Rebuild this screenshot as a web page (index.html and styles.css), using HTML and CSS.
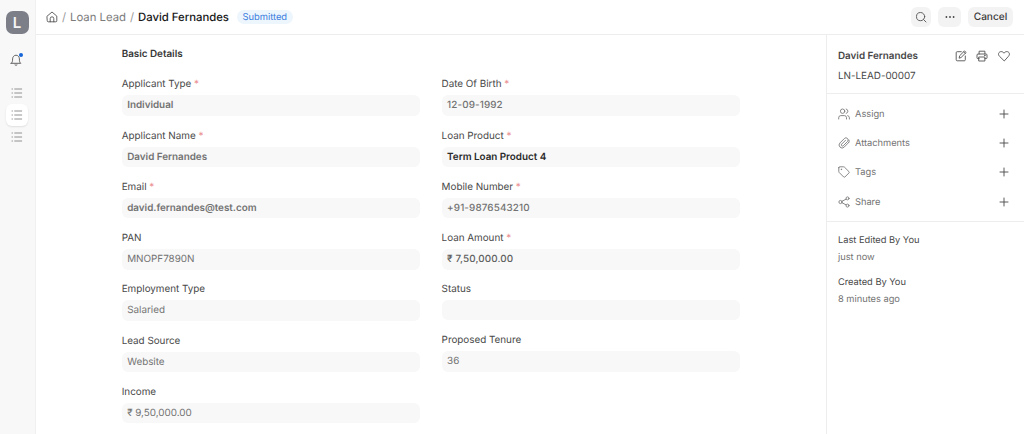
FILE: index.html
```html
<!DOCTYPE html>
<html lang="en">
<head>
	<meta charset="utf-8">
	<title>David Fernandes</title>
	<link rel="stylesheet" href="styles.css">
</head>
<body>

<!-- shared icons -->
<svg class="defs">
	<symbol id="list" viewBox="0 0 12 12"><path d="M3.700 2h7M3.700 6h7M3.700 10h7M1 2h.5M1 6h.5M1 10h.5"/></symbol>
	<symbol id="plus" viewBox="0 0 10 10"><path d="M5 1v8M1 5h8"/></symbol>
</svg>

<div class="app">
	<nav class="rail">
		<div class="logo">L</div>
		<div class="bell">
			<svg viewBox="0 0 12 12"><path d="M1.2 9.300h9.600C9.500 8.300 9.400 7 9.400 4.900C9.400 2.900 7.900 1.200 6 1.200S2.600 2.900 2.600 4.900C2.600 7 2.500 8.300 1.200 9.300zM5 11q1 .8 2 0"/></svg>
			<i class="dot"></i>
		</div>
		<a class="item"><svg><use href="#list"/></svg></a>
		<a class="item active"><svg><use href="#list"/></svg></a>
		<a class="item"><svg><use href="#list"/></svg></a>
	</nav>

	<div class="page">
		<header class="top">
			<svg class="home" viewBox="0 0 12 12"><path d="M1.200 5.100 6 1l4.800 4.100v4.700q0 1-1 1H2.200q-1 0-1-1zM4.200 10.800V7.600a1.800 1.800 0 0 1 3.600 0v3.200"/></svg>
			<span class="sep">/</span>
			<span class="crumb">Loan Lead</span>
			<span class="sep">/</span>
			<span class="crumb current">David Fernandes</span>
			<span class="pill">Submitted</span>
			<div class="actions">
				<button class="btn search"><svg viewBox="0 0 12 12"><circle cx="5.600" cy="5.600" r="4.100"/><path d="m8.600 8.600 2.400 2.400"/></svg></button>
				<button class="btn more"><svg viewBox="0 0 12 12"><circle cx="2.400" cy="6" r=".9"/><circle cx="6" cy="6" r=".9"/><circle cx="9.600" cy="6" r=".9"/></svg></button>
				<button class="btn cancel">Cancel</button>
			</div>
		</header>

		<div class="body">
			<main class="form">
				<h2>Basic Details</h2>
				<div class="columns">
					<div class="col">
						<div class="field"><label>Applicant Type <b>*</b></label><div class="value bold">Individual</div></div>
						<div class="field"><label>Applicant Name <b>*</b></label><div class="value bold">David Fernandes</div></div>
						<div class="field"><label>Email <b>*</b></label><div class="value bold">david.fernandes@test.com</div></div>
						<div class="field"><label>PAN</label><div class="value">MNOPF7890N</div></div>
						<div class="field"><label>Employment Type</label><div class="value">Salaried</div></div>
						<div class="field"><label>Lead Source</label><div class="value">Website</div></div>
						<div class="field"><label>Income</label><div class="value">₹ 9,50,000.00</div></div>
					</div>
					<div class="col">
						<div class="field"><label>Date Of Birth <b>*</b></label><div class="value medium">12-09-1992</div></div>
						<div class="field"><label>Loan Product <b>*</b></label><div class="value link">Term Loan Product 4</div></div>
						<div class="field"><label>Mobile Number <b>*</b></label><div class="value medium">+91-9876543210</div></div>
						<div class="field"><label>Loan Amount <b>*</b></label><div class="value medium amount">₹ 7,50,000.00</div></div>
						<div class="field short"><label>Status</label><div class="value"></div></div>
						<div class="field"><label>Proposed Tenure</label><div class="value">36</div></div>
					</div>
				</div>
			</main>

			<aside class="side">
				<div class="doc">
					<div class="title">
						<strong>David Fernandes</strong>
						<svg viewBox="0 0 12 12"><path d="M6.300 1.700H2.200q-1 0-1 1v7.100q0 1 1 1h7.100q1 0 1-1V6M4.200 7.800l.5-2.100L9.500.9l1.600 1.600-4.800 4.800zM8.600 1.800l1.600 1.600"/></svg>
						<svg viewBox="0 0 12 12"><path d="M3.100 4V1.200h5.800V4M3.100 8.600H1.800q-.8 0-.8-.8V5q0-1 1-1h8q1 0 1 1v2.800q0 .8-.8.8H8.900M3.100 7h5.800v4H3.100zM8.500 5.500h.8"/></svg>
						<svg viewBox="0 0 12 12"><path d="M6 10.700 1.500 6.300C-.5 4.200.8 1.600 3.200 1.600c1.400 0 2.300.8 2.800 1.600.5-.8 1.400-1.600 2.800-1.600 2.400 0 3.700 2.600 1.700 4.700z"/></svg>
					</div>
					<div class="id">LN-LEAD-00007</div>
				</div>
				<div class="tools">
					<div class="tool">
						<svg viewBox="0 0 12 12"><circle cx="4.600" cy="3.200" r="2.200"/><path d="M.7 11V9.700q0-2.100 2.100-2.100h3.600q2.100 0 2.100 2.100V11M8.200 1q1.700.5 1.700 2.200T8.200 5.400M9.700 7.600q1.700.4 1.700 2.100V11"/></svg>
						<span>Assign</span><svg class="plus"><use href="#plus"/></svg>
					</div>
					<div class="tool">
						<svg viewBox="0 0 12 12"><path d="M10.800 5.400 6.200 10.100A2.900 2.900 0 0 1 2 5.900L6.400 1.500A2.100 2.100 0 0 1 9.500 4.500L5.300 8.700A1.100 1.100 0 0 1 3.700 7.100L7.500 3.300M10.800 5.400Q11.700 4.300 11 3"/></svg>
						<span>Attachments</span><svg class="plus"><use href="#plus"/></svg>
					</div>
					<div class="tool">
						<svg viewBox="0 0 12 12"><path d="M.8 1.700v4q0 .4.300.7l4.600 4.600q.6.500 1.200 0l4.100-4.100q.5-.6 0-1.200L6.400 1.100Q6.100.8 5.700.8h-4q-.9 0-.9.900z"/><circle cx="3.300" cy="3.300" r=".3"/></svg>
						<span>Tags</span><svg class="plus"><use href="#plus"/></svg>
					</div>
					<div class="tool">
						<svg viewBox="0 0 12 12"><circle cx="2.500" cy="6" r="1.600"/><circle cx="9.500" cy="2.400" r="1.500"/><circle cx="9.500" cy="9.600" r="1.500"/><path d="m3.900 5.300 4.300-2.200M3.900 6.700l4.300 2.200"/></svg>
						<span>Share</span><svg class="plus"><use href="#plus"/></svg>
					</div>
				</div>
				<div class="log">
					<div>Last Edited By You</div>
					<p>just now</p>
					<div>Created By You</div>
					<p>8 minutes ago</p>
				</div>
			</aside>
		</div>
	</div>
</div>

</body>
</html>
```
FILE: styles.css
```css
* {
	box-sizing: border-box;
	}
body {
	margin: 0;
	background: #fff;
	color: #484848;
	font: 9.9px/14px Inter, sans-serif;
	letter-spacing: -0.02px;
	text-rendering: geometricPrecision;
	}
svg {
	display: block;
	flex: none;
	width: 12px;
	height: 12px;
	fill: none;
	stroke: #525252;
	stroke-width: .9;
	stroke-linecap: round;
	stroke-linejoin: round;
	}
.defs {
	position: absolute;
	width: 0;
	height: 0;
	}
.app {
	display: flex;
	height: 434px;
	overflow: hidden;
	}

/* left rail */
.rail {
	display: flex;
	flex-direction: column;
	align-items: center;
	flex: none;
	width: 36px;
	padding: 11px 1px 0 0;
	background: #f8f8f8;
	border-right: 1px solid #f0f0f0;
	}
.logo {
	width: 23px;
	height: 23px;
	border-radius: 7px;
	background: #7c7f88;
	color: #f4f4f4;
	font: 600 15px/23px Inter, sans-serif;
	text-align: center;
	}
.bell {
	position: relative;
	left: -1px;
	margin: 20px 0 16px;
	}
.dot {
	position: absolute;
	top: -1px;
	right: -1px;
	width: 4px;
	height: 4px;
	border-radius: 50%;
	background: #1565d8;
	}
.item {
	display: flex;
	align-items: center;
	justify-content: center;
	width: 22px;
	height: 22px;
	border-radius: 6px;
	}
.item svg {
	stroke: #777;
	stroke-width: .8;
	}
.item.active {
	background: #fff;
	box-shadow: 0 1px 2px rgba(0,0,0,.1);
	}

/* header */
.page {
	flex: 1;
	display: flex;
	flex-direction: column;
	}
.top {
	display: flex;
	align-items: center;
	flex: none;
	height: 35px;
	padding: 0 11px 0 10px;
	border-bottom: 1px solid #ededed;
	font-size: 11.35px;
	}
.sep {
	margin: 0 4px;
	color: #999;
	}
.crumb {
	color: #7c7c7c;
	}
.current {
	color: #171717;
	font-weight: 500;
	}
.pill {
	height: 14px;
	margin-left: 8px;
	padding: 0 5.500px;
	border-radius: 7px;
	background: #edf6fd;
	color: #3b7ddd;
	font-size: 9.400px;
	line-height: 15px;
	}
.actions {
	display: flex;
	gap: 7px;
	margin-left: auto;
	}
.btn {
	display: flex;
	align-items: center;
	justify-content: center;
	height: 20px;
	padding: 0;
	border: 0;
	border-radius: 6px;
	background: #f3f3f3;
	color: #383838;
	font: 500 10.100px Inter, sans-serif;
	letter-spacing: 0;
	text-rendering: inherit;
	}
.search {
	width: 20px;
	}
.more {
	width: 23px;
	}
.more svg {
	fill: #444;
	stroke: none;
	}
.cancel {
	width: 45px;
	}

/* form */
.body {
	display: flex;
	flex: 1;
	}
.form {
	flex: 1;
	padding: 11.500px 86px 0 85.700px;
	}
h2 {
	margin: 0 0 16.900px;
	color: #383838;
	font-size: 9.900px;
	font-weight: 600;
	line-height: 14px;
	}
.columns {
	display: grid;
	grid-template-columns: 1fr 1fr;
	gap: 21.500px;
	}
.field {
	height: 51.250px;
	}
.field.short {
	height: 50.600px;
	}
label {
	display: block;
	height: 18.100px;
	}
label b {
	color: #eb9091;
	font-weight: 400;
	}
.value {
	height: 20.500px;
	padding-left: 5.500px;
	border-radius: 6px;
	background: #f8f8f8;
	color: #737373;
	line-height: 21.200px;
	}
.short .value {
	height: 20px;
	}
.bold {
	font-weight: 600;
	}
.medium {
	font-weight: 500;
	letter-spacing: .12px;
	}
.amount {
	color: #606060;
	}
.link {
	color: #2a2a2a;
	font-weight: 600;
	}

/* right panel */
.side {
	width: 198px;
	border-left: 1px solid #ededed;
	}
.doc {
	height: 59px;
	padding: 13.500px 14.500px 0 11px;
	border-bottom: 1px solid #ededed;
	}
.title {
	display: flex;
	align-items: center;
	gap: 9.500px;
	}
.title strong {
	flex: 1;
	font-weight: 600;
	}
.id {
	margin-top: 6px;
	}
.tools {
	height: 128px;
	padding: 5.500px 15px 0 11px;
	border-bottom: 1px solid #ededed;
	}
.tool {
	display: flex;
	align-items: center;
	height: 29.200px;
	color: #737373;
	font-size: 9.300px;
	}
.tool svg {
	stroke: #7c7c7c;
	}
.tool span {
	flex: 1;
	margin-left: 5px;
	padding-top: 2px;
	}
.tool .plus {
	width: 10px;
	height: 10px;
	stroke: #484848;
	}
.log {
	padding: 11.500px 11px;
	font-size: 9.300px;
	}
.log p {
	margin: 3px 0 11px;
	color: #737373;
	}
```
